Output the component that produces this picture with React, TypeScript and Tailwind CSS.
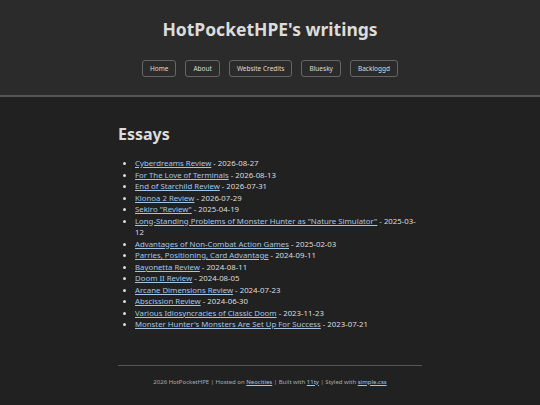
const nav = ["Home", "About", "Website Credits", "Bluesky", "Backloggd"];

const essays: [string, string][] = [
  ["Cyberdreams Review", "2026-08-27"],
  ["For The Love of Terminals", "2026-08-13"],
  ["End of Starchild Review", "2026-07-31"],
  ["Klonoa 2 Review", "2026-07-29"],
  ['Sekiro "Review"', "2025-04-19"],
  ['Long-Standing Problems of Monster Hunter as "Nature Simulator"', "2025-03-12"],
  ["Advantages of Non-Combat Action Games", "2025-02-03"],
  ["Parries, Positioning, Card Advantage", "2024-09-11"],
  ["Bayonetta Review", "2024-08-11"],
  ["Doom II Review", "2024-08-05"],
  ["Arcane Dimensions Review", "2024-07-23"],
  ["Abscission Review", "2024-06-30"],
  ["Various Idiosyncracies of Classic Doom", "2023-11-23"],
  ["Monster Hunter's Monsters Are Set Up For Success", "2023-07-21"],
];

export default function App() {
  return (
    <div
      className="min-h-[405px] w-[540px] bg-[#212121] text-[#dcdcdc]"
      style={{ fontFamily: '"Noto Sans", "Open Sans", sans-serif' }}
    >
      {/* header */}
      <header className="h-[97px] bg-[#2b2b2b] border-b-2 border-[#555] flex flex-col items-center pt-[16px]">
        <h1 className="text-[17.5px] font-bold leading-[26px] text-[#dcdcdc]">HotPocketHPE's writings</h1>
        <nav className="mt-[18px] flex gap-[9px]">
          {nav.map((n) => (
            <a
              key={n}
              className="h-[17px] px-[7px] flex items-center rounded-[3px] border border-[#666] text-[6.5px] text-[#dcdcdc]"
            >
              {n}
            </a>
          ))}
        </nav>
      </header>

      {/* essays */}
      <main className="w-[304px] mx-auto pt-[26px]">
        <h2 className="text-[16px] font-bold leading-[22px]">Essays</h2>
        <ul className="mt-[13px] list-disc pl-[17px] text-[7.8px] leading-[11.5px] marker:text-[#dcdcdc]">
          {essays.map(([title, date]) => (
            <li key={title}>
              <a className="text-[#a3c6e6] underline">{title}</a> - {date}
            </li>
          ))}
        </ul>
      </main>

      {/* footer */}
      <footer className="w-[304px] mx-auto mt-[34px] border-t border-[#555] pt-[12px] text-center text-[6px] text-[#ababab]">
        2026 HotPocketHPE | Hosted on <a className="text-[#a3c6e6] underline">Neocities</a> | Built with{" "}
        <a className="text-[#a3c6e6] underline">11ty</a> | Styled with{" "}
        <a className="text-[#a3c6e6] underline">simple.css</a>
      </footer>
    </div>
  );
}
